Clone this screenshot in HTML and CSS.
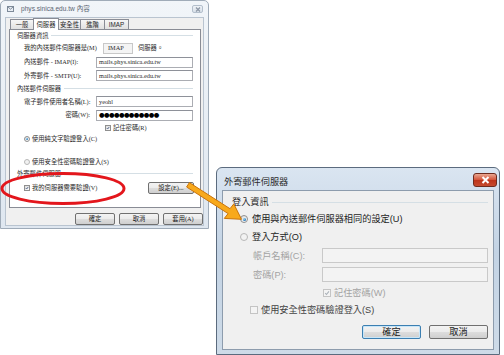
FILE: index.html
```html
<!DOCTYPE html>
<html lang="zh-Hant">
<head>
  <meta charset="UTF-8" />
  <meta name="viewport" content="width=device-width, initial-scale=1.0"/>
  <title>外寄郵件伺服器設定</title>
  <link rel="stylesheet" href="styles.css">
</head>
<body>
  <div class="desk">

    <!-- 帳戶內容 -->
    <div class="win win-props">
      <div class="titlebar">
        <svg class="app-icon" width="7" height="6" viewBox="0 0 7 6">
          <rect x="0.5" y="0.5" width="6" height="5" fill="#e9eef4" stroke="#7d8a99"/>
          <path d="M0.5 0.5 L3.5 3.2 L6.5 0.5" fill="none" stroke="#7d8a99"/>
        </svg>
        <span class="title">phys.sinica.edu.tw 內容</span>
        <span class="close close-off">
          <svg width="6" height="5" viewBox="0 0 6 5"><path d="M1 0.5 L5 4.5 M5 0.5 L1 4.5" stroke="#8d98a6" stroke-width="1.2"/></svg>
        </span>
      </div>
      <div class="client">
        <div class="tabs">
          <span class="tab" style="width:24px">一般</span>
          <span class="tab tab-on" style="width:26px">伺服器</span>
          <span class="tab" style="width:23px">安全性</span>
          <span class="tab" style="width:25px">進階</span>
          <span class="tab" style="width:25px">IMAP</span>
        </div>
        <div class="panel">
          <div class="group g1"><span>伺服器資訊</span></div>
          <div class="row row-m">
            <span class="lbl-m">我的內送郵件伺服器是(M)</span>
            <span class="combo">IMAP</span>
            <span>伺服器。</span>
          </div>
          <div class="row row-i">
            <span class="lbl">內送郵件 - IMAP(I):</span>
            <span class="field">mails.phys.sinica.edu.tw</span>
          </div>
          <div class="row row-u">
            <span class="lbl">外寄郵件 - SMTP(U):</span>
            <span class="field">mails.phys.sinica.edu.tw</span>
          </div>
          <div class="group g2"><span>內送郵件伺服器</span></div>
          <div class="row row-l">
            <span class="lbl">電子郵件使用者名稱(L):</span>
            <span class="field">yeohl</span>
          </div>
          <div class="row row-w">
            <span class="lbl lbl-right">密碼(W):</span>
            <span class="field"><span class="mask">●●●●●●●●●●●●</span></span>
          </div>
          <div class="row row-r">
            <span class="cb cb-on"><svg viewBox="0 0 8 8"><path d="M1.6 4.2 L3.3 6 L6.6 1.8" fill="none" stroke="#3a4f7a" stroke-width="1.6"/></svg></span>
            <span>記住密碼(R)</span>
          </div>
          <div class="row row-c">
            <span class="rd rd-on"></span>
            <span>使用純文字驗證登入(C)</span>
          </div>
          <div class="row row-s">
            <span class="rd rd-dim"></span>
            <span>使用安全性密碼驗證登入(S)</span>
          </div>
          <div class="group g3"><span>外寄郵件伺服器</span></div>
          <div class="row row-v">
            <span class="cb cb-on"><svg viewBox="0 0 8 8"><path d="M1.6 4.2 L3.3 6 L6.6 1.8" fill="none" stroke="#3a4f7a" stroke-width="1.6"/></svg></span>
            <span>我的伺服器需要驗證(V)</span>
            <span class="btn btn-set">設定(E)...</span>
          </div>
        </div>
        <div class="actions">
          <span class="btn">確定</span>
          <span class="btn">取消</span>
          <span class="btn">套用(A)</span>
        </div>
      </div>
    </div>

    <!-- 外寄郵件伺服器 -->
    <div class="win win-smtp">
      <div class="titlebar">
        <span class="title">外寄郵件伺服器</span>
        <span class="close close-red">
          <svg width="9" height="8" viewBox="0 0 9 8"><path d="M1.5 1 L7.5 7 M7.5 1 L1.5 7" stroke="#fff" stroke-width="2"/></svg>
        </span>
      </div>
      <div class="client">
        <div class="group"><span>登入資訊</span></div>
        <div class="row row-radio">
          <span class="rd rd-on"></span>
          <span>使用與內送郵件伺服器相同的設定(U)</span>
        </div>
        <div class="row row-radio">
          <span class="rd rd-dim"></span>
          <span>登入方式(O)</span>
        </div>
        <div class="row row-field">
          <span class="lbl off">帳戶名稱(C):</span>
          <span class="field off-field"></span>
        </div>
        <div class="row row-field">
          <span class="lbl off">密碼(P):</span>
          <span class="field off-field"></span>
        </div>
        <div class="row row-remember">
          <span class="cb cb-dim"><svg viewBox="0 0 8 8"><path d="M1.6 4.2 L3.3 6 L6.6 1.8" fill="none" stroke="#a9b0b8" stroke-width="1.4"/></svg></span>
          <span class="off">記住密碼(W)</span>
        </div>
        <div class="row row-secure">
          <span class="cb cb-dim"></span>
          <span class="dim">使用安全性密碼驗證登入(S)</span>
        </div>
        <div class="actions">
          <span class="btn btn-focus">確定</span>
          <span class="btn">取消</span>
        </div>
      </div>
    </div>

    <!-- 標示 -->
    <svg class="marks" width="504" height="355" viewBox="0 0 504 355">
      <ellipse cx="63" cy="188.5" rx="61" ry="15" fill="none" stroke="#e3161c" stroke-width="3"/>
      <polygon points="189.4,182.6 230,208.7 233.8,203.9 241.5,219.3 224.3,218.4 228.1,213.6 186.6,187" fill="#f8a91b" stroke="#c9740c" stroke-width="1" stroke-linejoin="round"/>
    </svg>

  </div>
</body>
</html>
```

FILE: styles.css
```css
body {
  margin: 0;
  background-color: #fff;
}
.desk {
  position: relative;
  width: 504px;
  height: 355px;
  overflow: hidden;
}
.win {
  position: absolute;
  box-sizing: border-box;
  display: flex;
  flex-direction: column;
}
.titlebar {
  display: flex;
  align-items: center;
}
.client {
  flex: 1;
  display: flex;
  flex-direction: column;
  background-color: #f0f0f0;
  box-sizing: border-box;
}
.row {
  display: flex;
  align-items: center;
  white-space: nowrap;
}
.group {
  display: flex;
  align-items: center;
  color: #2a2a2a;
}
.group::after {
  content: '';
  flex: 1;
  border-top: 1px solid #d5dfe5;
  margin-left: 3px;
}
.field {
  box-sizing: border-box;
  background-color: #fff;
  border: 1px solid #abadb3;
  border-top-color: #8e9199;
  display: flex;
  align-items: center;
}
.btn {
  box-sizing: border-box;
  display: flex;
  align-items: center;
  justify-content: center;
  border: 1px solid #707070;
  border-radius: 2px;
  background: linear-gradient(#f3f3f3 0%, #ebebeb 49%, #dddddd 50%, #cfcfcf 100%);
  color: #222;
}
.actions {
  display: flex;
  justify-content: flex-end;
}
.cb {
  box-sizing: border-box;
  border: 1px solid #8f8f8f;
  background: linear-gradient(135deg, #dcdcdc, #fbfbfb);
  display: flex;
}
.cb svg {
  width: 100%;
  height: 100%;
}
.rd {
  box-sizing: border-box;
  border: 1px solid #8f8f8f;
  border-radius: 50%;
  background: linear-gradient(135deg, #dcdcdc, #fbfbfb);
  display: flex;
  align-items: center;
  justify-content: center;
}
.rd-on::after {
  content: '';
  width: 50%;
  height: 50%;
  border-radius: 50%;
  background: radial-gradient(circle at 35% 35%, #9fe0ff, #1c6fb5 70%);
}
.rd-dim {
  border-color: #b8b8b8;
  background: #f2f2f2;
}

/* 帳戶內容視窗 */
.win-props {
  left: 0;
  top: 0;
  width: 209px;
  height: 229px;
  padding: 0 4px 2px;
  border: 1px solid #9fabb8;
  border-radius: 5px 5px 0 0;
  background: linear-gradient(#f1f5f9, #dfe7f0);
  font-family: "Liberation Serif", "Noto Sans CJK TC", serif;
  font-size: 6.3px;
  line-height: 8px;
  color: #2a2a2a;
}
.win-props .titlebar {
  height: 16px;
  padding-left: 2px;
}
.win-props .title {
  margin-left: 7px;
  font-family: "Liberation Sans", "Noto Sans CJK TC", sans-serif;
  font-size: 6.6px;
  color: #5a6472;
}
.close-off {
  margin-left: auto;
  margin-right: 1px;
  width: 11px;
  height: 8px;
  box-sizing: border-box;
  border: 1px solid #b3bfcc;
  border-radius: 2px;
  background: linear-gradient(#eef2f6, #d9e1ea);
  display: flex;
  align-items: center;
  justify-content: center;
}
.win-props .client {
  border: 1px solid #b9c4d0;
  padding: 0 0 0 3px;
}
.tabs {
  display: flex;
  align-items: flex-end;
  height: 11px;
  margin-left: 1px;
}
.tab {
  box-sizing: border-box;
  height: 10px;
  border: 1px solid #898c95;
  border-bottom: none;
  margin-right: -1px;
  background: linear-gradient(#f6f6f6, #e0e0e0);
  display: flex;
  align-items: center;
  justify-content: center;
  font-family: "Liberation Sans", "Noto Sans CJK TC", sans-serif;
}
.tab-on {
  position: relative;
  z-index: 1;
  height: 12px;
  margin-bottom: -1px;
  background: #fff;
}
.panel {
  box-sizing: border-box;
  width: 192px;
  height: 179px;
  background-color: #fff;
  border: 1px solid #898c95;
  padding: 0 7px;
}
.panel .group {
  height: 11px;
}
.panel .g2 {
  height: 13px;
}
.panel .row {
  padding-left: 7px;
}
.panel .field {
  flex: 1;
  height: 11px;
  padding-left: 2px;
}
.panel .lbl {
  width: 72px;
}
.panel .lbl-right {
  text-align: right;
  padding-right: 6px;
  box-sizing: border-box;
}
.row-m { height: 14px; }
.row-i { height: 14px; }
.row-u { height: 13px; }
.row-l { height: 13px; }
.row-w { height: 14px; }
.row-r { height: 11px; }
.row-c { height: 12px; }
.row-s { height: 12px; margin-top: 11px; }
.row-v { height: 14px; margin-top: 2px; }
.lbl-m {
  width: 79px;
}
.combo {
  box-sizing: border-box;
  width: 30px;
  height: 11px;
  border: 1px solid #c8c8c8;
  background-color: #f4f4f4;
  display: flex;
  align-items: center;
  padding-left: 4px;
  margin-right: 5px;
}
.mask {
  font-family: "DejaVu Sans", sans-serif;
  font-size: 6.4px;
  letter-spacing: -0.6px;
  color: #000;
}
.panel .row-r {
  padding-left: 88px;
}
.panel .cb {
  width: 6px;
  height: 6px;
  margin-right: 2px;
}
.panel .rd {
  width: 6px;
  height: 6px;
  margin-right: 2px;
}
.btn-set {
  margin-left: auto;
  width: 46px;
  height: 12px;
  margin-right: -1px;
}
.win-props .actions {
  margin-top: 5px;
  gap: 4px;
}
.win-props .actions .btn {
  width: 40px;
  height: 12px;
}

/* 外寄郵件伺服器視窗 */
.win-smtp {
  left: 216px;
  top: 167px;
  width: 284px;
  height: 188px;
  padding: 0 5px 4px;
  border: 1px solid #5b6b7e;
  border-radius: 6px 6px 0 0;
  background: linear-gradient(#dae5f1, #c3d3e4 45%, #cedbe8);
  font-family: "Liberation Sans", "Noto Sans CJK TC", sans-serif;
  font-size: 9.2px;
  line-height: 12px;
  color: #1e1e1e;
}
.win-smtp .titlebar {
  height: 22px;
  align-items: flex-start;
}
.win-smtp .title {
  margin-top: 8px;
  margin-left: 2px;
  color: #2b2b2b;
}
.close-red {
  margin-left: auto;
  margin-top: 5px;
  margin-right: -3px;
  width: 24px;
  height: 14px;
  box-sizing: border-box;
  border: 1px solid #6e2b1e;
  border-radius: 3px;
  background: linear-gradient(#eaa892, #d4553b 48%, #bd341b 52%, #c64a2e);
  display: flex;
  align-items: center;
  justify-content: center;
}
.win-smtp .client {
  border: 1px solid #8d9cad;
  padding: 3px 5px 0 9px;
}
.win-smtp .group {
  height: 16px;
}
.row-radio {
  height: 18px;
}
.win-smtp .rd {
  width: 8px;
  height: 8px;
  margin-left: 8px;
  margin-right: 4px;
}
.row-field {
  height: 19px;
}
.row-field .lbl {
  box-sizing: border-box;
  width: 90px;
  padding-left: 21px;
}
.off-field {
  flex: 1;
  height: 15px;
  background-color: #f3f3f3;
  border-color: #c9c9c9;
}
.off {
  color: #a3a3a3;
}
.dim {
  color: #444;
}
.row-remember {
  height: 17px;
  padding-left: 91px;
}
.row-secure {
  height: 18px;
  padding-left: 18px;
}
.win-smtp .cb {
  width: 8px;
  height: 8px;
  margin-right: 3px;
}
.cb-dim {
  border-color: #c4c4c4;
  background: #f4f4f4;
}
.win-smtp .actions {
  margin-top: 6px;
  gap: 8px;
}
.win-smtp .actions .btn {
  width: 59px;
  height: 14px;
}
.btn-focus {
  border-color: #3c7fb1;
  box-shadow: inset 0 0 0 1px #c7e6f9;
}

/* 紅圈與箭頭 */
.marks {
  position: absolute;
  left: 0;
  top: 0;
  pointer-events: none;
}
```
